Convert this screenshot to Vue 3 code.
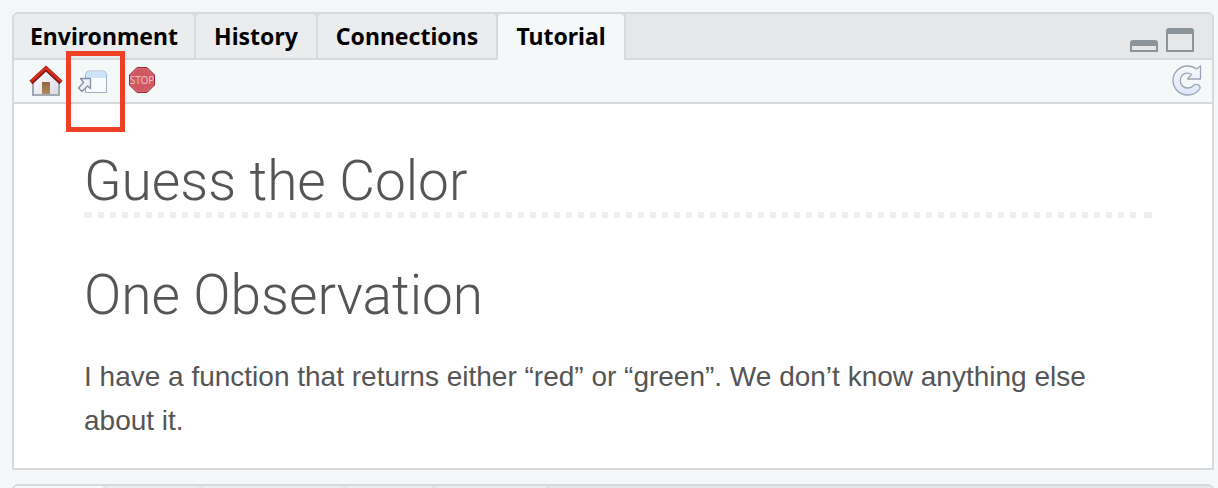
<script setup>
import { ref } from 'vue'

const tabs = ['Environment', 'History', 'Connections', 'Tutorial']
const active = ref('Tutorial')
</script>

<template>
  <main class="workspace">
    <section class="pane">
      <header class="tabbar">
        <div class="tabs" role="tablist">
          <button
            v-for="tab in tabs"
            :key="tab"
            type="button"
            role="tab"
            class="tab"
            :class="{ active: tab === active }"
            :aria-selected="tab === active"
            @click="active = tab"
          >{{ tab }}</button>
        </div>
        <div class="window-buttons">
          <button type="button" class="icon" aria-label="Minimize">
            <svg width="28" height="24" viewBox="0 0 28 24">
              <path d="M0 24V15q0-3 3-3h22q3 0 3 3v9zM2 18v4h24v-4z" fill="#8b9599" fill-rule="evenodd" />
            </svg>
          </button>
          <button type="button" class="icon" aria-label="Maximize">
            <svg width="28" height="24" viewBox="0 0 28 24">
              <path d="M0 24V3q0-3 3-3h22q3 0 3 3v21zM2 6v16h24V6z" fill="#8b9599" fill-rule="evenodd" />
            </svg>
          </button>
        </div>
      </header>

      <div class="toolbar">
        <button type="button" class="icon" aria-label="Home">
          <svg width="34" height="32" viewBox="0 0 34 32">
            <defs>
              <linearGradient id="wall" x1="0" y1="0" x2="1" y2="1">
                <stop offset="0" stop-color="#fff" /><stop offset="1" stop-color="#d9dbe4" />
              </linearGradient>
              <linearGradient id="door" x1="0" y1="0" x2="0" y2="1">
                <stop offset="0" stop-color="#8d6740" /><stop offset="1" stop-color="#b48a5c" />
              </linearGradient>
            </defs>
            <path d="M4 17 17 5l13 12v14H4z" fill="url(#wall)" />
            <path d="M4 17v14h26V17" fill="none" stroke="#a0a9b2" stroke-width="2" />
            <path d="M13 30V18h8v12z" fill="url(#door)" />
            <path d="M2 18.500 17 4.500l15 14" fill="none" stroke="#7d1a12" stroke-width="4.500" />
            <path d="M2 17.500 17 3.800l15 13.700" fill="none" stroke="#dc2a1b" stroke-width="2.500" />
          </svg>
        </button>
        <button type="button" class="icon popout" aria-label="Show in new window">
          <svg width="32" height="26" viewBox="0 0 32 26">
            <path d="M8.500 25.500V8q0-4 4-4h13q4 0 4 4v17.500z" fill="#f8fbff" stroke="#9fb0c3" />
            <path d="M9 11V8q0-3.500 3.500-3.500h13q3.500 0 3.500 3.500v3z" fill="#cfe4fb" />
            <path d="M3.500 11.500H13.500V21.500l-3-2.500-5.500 5.500-3.500-3.500 5-5.500z" fill="#edf0f5" stroke="#8590a0" stroke-width="1.300" stroke-linejoin="round" />
          </svg>
        </button>
        <button type="button" class="icon" aria-label="Stop">
          <svg width="26" height="26" viewBox="0 0 26 26">
            <path d="M8 .500h10L25.500 8v10L18 25.500H8L.500 18V8z" fill="#cf5863" stroke="#9b2730" />
            <path d="M8.500 1.700h9l6.800 6.800v9l-6.800 6.800h-9l-6.800-6.800v-9z" fill="none" stroke="#d9707a" />
            <text x="13" y="17" text-anchor="middle" class="stop-text">STOP</text>
          </svg>
        </button>
        <button type="button" class="icon refresh" aria-label="Refresh">
          <svg width="30" height="32" viewBox="0 0 30 32">
            <defs>
              <linearGradient id="arc" x1="0" y1="0" x2="0" y2="1">
                <stop offset="0" stop-color="#f7f9fc" /><stop offset="1" stop-color="#dce6fb" />
              </linearGradient>
            </defs>
            <path d="M24.500 5 28.500 2v13H15.500L19.500 10.500C17 8.500 13 8.500 10.500 11 7.500 14 7.500 19 10.500 22 13.500 25 18.500 24.500 21.500 21.500 23.500 19 29 21 28 24.500 25.500 28.500 21 31 15.500 31 7.500 31 1 24.500 1 16.500S7.500 2 15.500 2C19 2 22 3 24.500 5z" fill="url(#arc)" stroke="#9ca4b5" stroke-width="1.300" stroke-linejoin="round" />
          </svg>
        </button>
      </div>

      <article class="document">
        <h1>Guess the Color</h1>
        <h2>One Observation</h2>
        <p>I have a function that returns either “red” or “green”. We don’t know anything else about it.</p>
      </article>
      <div class="highlight"></div>
    </section>

    <section class="next-pane">
      <div class="next-tabs"><i></i><i></i><i></i><i></i><i></i></div>
    </section>
  </main>
</template>

<style>
body {
  background: #f5f6f8;
  overflow: hidden;
}
</style>

<style scoped>
.workspace {
  padding: 12px 4px 0 12px;
  font-family: "Liberation Sans", Arial, sans-serif;
}
.pane {
  position: relative;
  border: 2px solid #d7dadc;
  border-radius: 6px 6px 0 0;
  background: #fff;
}
button {
  border: 0;
  padding: 0;
  background: none;
  color: inherit;
}
.tabbar {
  display: flex;
  justify-content: space-between;
  height: 46px;
  background: linear-gradient(#d7dadc, #d7dadc) bottom / 100% 2px no-repeat #e6e7e8;
  border-radius: 4px 4px 0 0;
}
.tabs {
  display: grid;
  grid-template-columns: 182px 122px 180px 128px;
  background: #d7dadc;
}
.tab {
  margin: 0 2px 2px 0;
  padding: 0;
  border-radius: 4px 4px 0 0;
  background: #ebecee;
  font: bold 23px/44px "Noto Sans", "Open Sans", sans-serif;
  color: #000;
  white-space: nowrap;
}
.tab.active {
  margin-bottom: 0;
  padding-bottom: 2px;
  background: #f4f8f9;
}
.window-buttons {
  display: flex;
  gap: 8px;
  padding: 14px 18px 0 0;
}
.icon {
  display: block;
  height: max-content;
}
.icon svg {
  display: block;
}
.toolbar {
  display: flex;
  align-items: center;
  height: 40px;
  padding: 0 10px 2px 15px;
  background: #f4f8f9;
  border-bottom: 2px solid #d7dadc;
}
.popout {
  margin: 0 20px 0 14px;
}
.refresh {
  margin-left: auto;
}
.stop-text {
  font: 10px "Noto Sans", sans-serif;
  fill: #f0bdc2;
}
.document {
  padding: 46px 60px 25px 70px;
  color: #555;
}
h1,
h2 {
  margin: 0;
  font: 300 55px/62px Roboto, "Liberation Sans", sans-serif;
}
h1 {
  padding-bottom: 6px;
  background:
    linear-gradient(#eee, #eee) left bottom / 2px 6px no-repeat,
    linear-gradient(to right, #fff 8px, #eee 8px) right bottom / 16px 6px no-repeat,
    repeating-linear-gradient(to right, #eee 0 6px, #fff 6px 12px) 2px bottom / 100% 6px no-repeat;
}
h2 {
  margin-top: 46px;
}
p {
  margin: 29px 0 0;
  font-size: 28px;
  line-height: 44px;
}
.highlight {
  position: absolute;
  left: 52px;
  top: 37px;
  width: 49px;
  height: 71px;
  border: 5px solid #ee4025;
  pointer-events: none;
}
.next-pane {
  height: 4px;
  margin-top: 14px;
  overflow: hidden;
}
.next-tabs {
  display: grid;
  grid-template-columns: 92px 96px 144px 90px 114px;
  height: 20px;
  border: 2px solid #d7dadc;
  border-radius: 6px 6px 0 0;
  background: #e6e7e8;
}
.next-tabs i {
  border-right: 2px solid #d7dadc;
  border-radius: 4px 4px 0 0;
  background: #ebecee;
}
.next-tabs i:first-child {
  background: #f9f9f9;
}
</style>
